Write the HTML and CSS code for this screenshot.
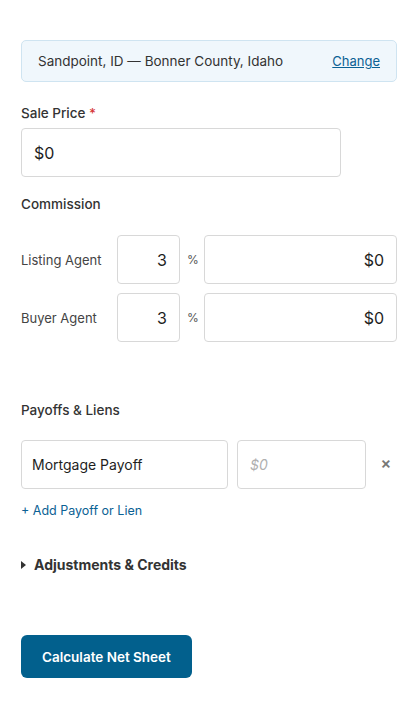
FILE: index.html
```html
<!DOCTYPE html>
<html lang="en">
<head>
    <meta charset="UTF-8">
    <meta name="viewport" content="width=device-width, initial-scale=1.0">
    <title>Seller Net Sheet</title>
    <link rel="stylesheet" href="styles.css">
</head>
<body>
    <form class="net-sheet">
        <div class="location">
            <span>Sandpoint, ID — Bonner County, Idaho</span>
            <a href="#" class="change-link">Change</a>
        </div>

        <div class="field sale-price">
            <label class="field-label">Sale Price <span class="required">*</span></label>
            <input type="text" class="input input-price" value="$0">
        </div>

        <div class="field commission">
            <div class="field-label">Commission</div>
            <div class="agent-row">
                <span class="agent-label">Listing Agent</span>
                <input type="text" class="input input-pct" value="3">
                <span class="pct">%</span>
                <input type="text" class="input input-amount" value="$0">
            </div>
            <div class="agent-row">
                <span class="agent-label">Buyer Agent</span>
                <input type="text" class="input input-pct" value="3">
                <span class="pct">%</span>
                <input type="text" class="input input-amount" value="$0">
            </div>
        </div>

        <div class="field payoffs">
            <div class="field-label">Payoffs &amp; Liens</div>
            <div class="payoff-row">
                <input type="text" class="input input-name" value="Mortgage Payoff">
                <input type="text" class="input input-payoff" placeholder="$0">
                <span class="remove">×</span>
            </div>
            <a href="#" class="add-link">+ Add Payoff or Lien</a>
        </div>

        <div class="adjustments">
            <span class="caret"></span>
            Adjustments &amp; Credits
        </div>

        <button type="button" class="calc-button">Calculate Net Sheet</button>
    </form>
</body>
</html>
```

FILE: styles.css
```css
body {
    margin: 0;
    padding: 40px 21px;
    font-family: Inter, "Noto Sans", Arial, sans-serif;
    color: #333;
    background-color: #fff;
}
.location {
    display: flex;
    justify-content: space-between;
    align-items: center;
    padding: 12px 16px;
    line-height: 16px;
    font-size: 13.5px;
    background-color: #f0f7fc;
    border: 1px solid #cfe4f1;
    border-radius: 5px;
    color: #333;
}
.change-link {
    color: #0b6194;
    text-decoration: underline;
    font-size: 13px;
}
.field-label {
    display: block;
    font-size: 13.5px;
    line-height: 17px;
    font-weight: 500;
    color: #333;
}
.required {
    color: #d63638;
}
.input {
    box-sizing: border-box;
    height: 49px;
    border: 1px solid #d8d8d8;
    border-radius: 4px;
    padding: 0 12px;
    font-family: inherit;
    font-size: 16px;
    color: #1e1e1e;
    background-color: #fff;
    outline: none;
    min-width: 0;
}
.sale-price {
    margin-top: 23px;
}
.sale-price .field-label {
    margin-bottom: 6px;
}
.input-price {
    width: 320px;
}
.commission {
    margin-top: 19px;
}
.commission .field-label {
    margin-bottom: 22px;
}
.agent-row {
    display: flex;
    align-items: center;
    margin-bottom: 9px;
}
.agent-label {
    width: 96px;
    flex-shrink: 0;
    font-size: 13px;
    color: #444;
}
.input-pct {
    width: 63px;
    text-align: right;
}
.pct {
    width: 10px;
    margin: 0 7px;
    font-size: 12px;
    color: #555;
}
.input-amount {
    flex: 1;
    text-align: right;
}
.payoffs {
    margin-top: 60px;
}
.payoffs .field-label {
    margin-bottom: 21px;
}
.payoff-row {
    display: flex;
    align-items: center;
    gap: 9px;
}
.input-name {
    width: 207px;
    font-size: 14px;
    padding-left: 10px;
}
.input-payoff {
    width: 129px;
    font-size: 14px;
}
.input-payoff::placeholder {
    color: #b0b0b0;
    font-style: italic;
}
.remove {
    flex: 1;
    text-align: center;
    font-size: 16px;
    font-weight: 600;
    color: #777;
    margin-top: -3px;
}
.add-link {
    display: inline-block;
    margin-top: 14px;
    font-size: 12.5px;
    line-height: 16px;
    color: #0b6194;
    text-decoration: none;
}
.adjustments {
    display: flex;
    align-items: center;
    margin-top: 37px;
    font-size: 14px;
    line-height: 18px;
    font-weight: 700;
    color: #333;
}
.caret {
    width: 0;
    height: 0;
    border-top: 4px solid transparent;
    border-bottom: 4px solid transparent;
    border-left: 5px solid #333;
    margin-right: 8px;
}
.calc-button {
    display: block;
    margin-top: 61px;
    height: 43px;
    padding: 0 21px;
    border: none;
    border-radius: 6px;
    background-color: #02608d;
    color: #fff;
    font-family: inherit;
    font-size: 13.5px;
    font-weight: 600;
    cursor: pointer;
}
```
